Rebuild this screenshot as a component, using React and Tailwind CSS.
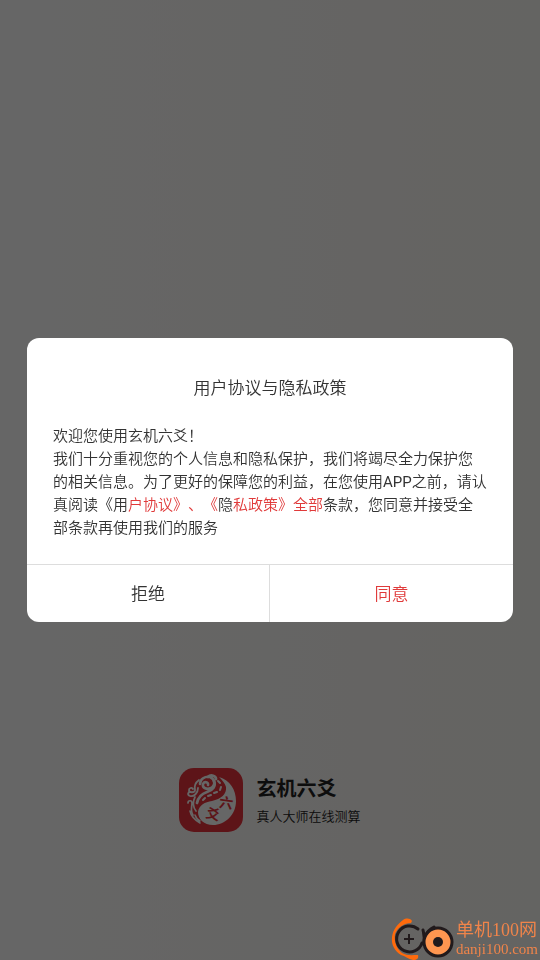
import React, { useState } from "react";

function AppLogo() {
  return (
    <svg viewBox="0 0 64 64" className="size-16 shrink-0" aria-hidden="true">
      <rect width="64" height="64" rx="15" fill="#e9343d" />
      <path
        d="M40 9C51 12 57 22 57 33C57 47 46 57 34 57C25 57 19 51 19 44C20 37 26 34 33 33C42 31 48 26 47 19C46 15 43 12 40 9Z"
        fill="#fff"
      />
      <g fill="none" stroke="#fff" strokeLinecap="round" strokeLinejoin="round">
        {/* head curl */}
        <path
          d="M29 17c1-3-4-4-5-1c-1 4 4 6 8 4c5-3 4-9-1-11c-5-1-10 2-10 7"
          strokeWidth="2.6"
        />
        <path d="M29 9c3-3 8-1 8 2M35 13c2 5-1 9-7 11c-6 2-9 6-10 11" strokeWidth="2.8" />
        {/* scales */}
        <path d="M39 13l2 2M42 19l-1 3M38 24l-3 1M32 27l-3 1M26 30l-2 2" strokeWidth="2" />
        {/* cloud curls along the left edge */}
        <path d="M20 12c-4 3-5 6-4 10c0 3-6 3-6 0c0-2 3-3 4-1" strokeWidth="1.8" />
        <path d="M19 20c0 5-4 9-8 8c-3-1-2-4 0-4" strokeWidth="1.8" />
        <path d="M9 35c0-3 4-3 4 0c0 4-2 8 1 12M16 29c-3 6-2 10 1 14" strokeWidth="1.7" />
        <path d="M11 43c1 5 5 9 10 12M16 47c1 3 3 5 5 6" strokeWidth="1.6" />
      </g>
      <g
        fill="#e9343d"
        fontWeight="700"
        fontSize="14"
        textAnchor="middle"
        className="font-['Noto_Sans_CJK_SC',sans-serif]"
      >
        <text x="47" y="40" transform="rotate(8 47 36)">六</text>
        <text x="34" y="51" transform="rotate(14 34 46)">爻</text>
      </g>
    </svg>
  );
}

function SiteMark() {
  return (
    <div className="flex items-end gap-px text-[#f0844a]">
      <svg viewBox="0 0 64 42" className="h-[42px] w-16 shrink-0" aria-hidden="true">
        <path
          d="M12 2C15 0 19 0 21 3L20 5C13 5 7 9 4 16C3 23 5 30 11 35C16 38 21 37 27 37C28 40 26 42 22 42C17 41 14 38 10 37C4 33 0 27 1 19C2 11 7 6 12 2Z"
          fill="#ff6a0c"
        />
        <path
          d="M27 11A13 13 0 1 0 31 25M32 12C33 17 34 20 33 26M34 18C36 14 39 11 43 9"
          fill="none"
          stroke="#211a1c"
          strokeWidth="3"
          strokeLinecap="round"
        />
        <path d="M18 16v10M13 21h10" stroke="#211a1c" strokeWidth="2" />
        <circle cx="47" cy="24" r="14" fill="#ff9650" stroke="#211a1c" strokeWidth="3" />
        <circle cx="47" cy="24" r="5" fill="#211a1c" />
      </svg>
      <div className="font-['Liberation_Serif','Noto_Sans_CJK_SC',serif] whitespace-nowrap">
        <div className="text-lg leading-4">单机100网</div>
        <div className="text-[15px] leading-[22px]">danji100.com</div>
      </div>
    </div>
  );
}

export default function App() {
  const [open, setOpen] = useState(true);

  return (
    <div className="min-h-screen flex flex-col justify-end items-center bg-linear-to-r from-white to-[#fbf9f4] pb-32 font-[Roboto,'Noto_Sans_CJK_SC',sans-serif] [text-spacing-trim:space-all]">
      <div className="flex items-center gap-[13px]">
        <AppLogo />
        <div className="pt-1.5 text-[#222]">
          <h1 className="text-xl leading-7 font-bold">玄机六爻</h1>
          <p className="text-[13px] leading-7 font-[350]">真人大师在线测算</p>
        </div>
      </div>

      {open && (
        <div className="fixed inset-0 flex items-center justify-center bg-black/60">
          <div
            role="dialog"
            aria-modal="true"
            aria-labelledby="policy-title"
            className="w-9/10 rounded-xl bg-white text-[#333] font-[350] overflow-hidden"
          >
            <div className="px-[26px] pt-[37px] pb-6">
              <h2 id="policy-title" className="text-center text-[17px] leading-[26px] font-[350]">
                用户协议与隐私政策
              </h2>
              <div className="mt-6 text-[15px] leading-[23px]">
                <p>欢迎您使用玄机六爻！</p>
                <p>
                  我们十分重视您的个人信息和隐私保护，我们将竭尽全力保护您的相关信息。为了更好的保障您的利益，在您使用
                  <span className="font-normal">APP</span>
                  之前，请认真阅读《用
                  <a href="#agreement" className="text-[#e03a3a]">户协议》、《</a>
                  隐
                  <a href="#privacy" className="text-[#e03a3a]">私政策》全部</a>
                  条款，您同意并接受全部条款再使用我们的服务
                </p>
              </div>
            </div>
            <div className="grid grid-cols-2 border-t border-[#ddd] text-[17px]">
              <button
                type="button"
                onClick={() => setOpen(false)}
                className="h-[57px] border-r border-[#ddd] pt-0.5"
              >
                拒绝
              </button>
              <button
                type="button"
                onClick={() => setOpen(false)}
                className="h-[57px] pt-0.5 text-[#e03a3a]"
              >
                同意
              </button>
            </div>
          </div>
        </div>
      )}

      <div className="fixed right-0 bottom-0 pr-0.5">
        <SiteMark />
      </div>
    </div>
  );
}
